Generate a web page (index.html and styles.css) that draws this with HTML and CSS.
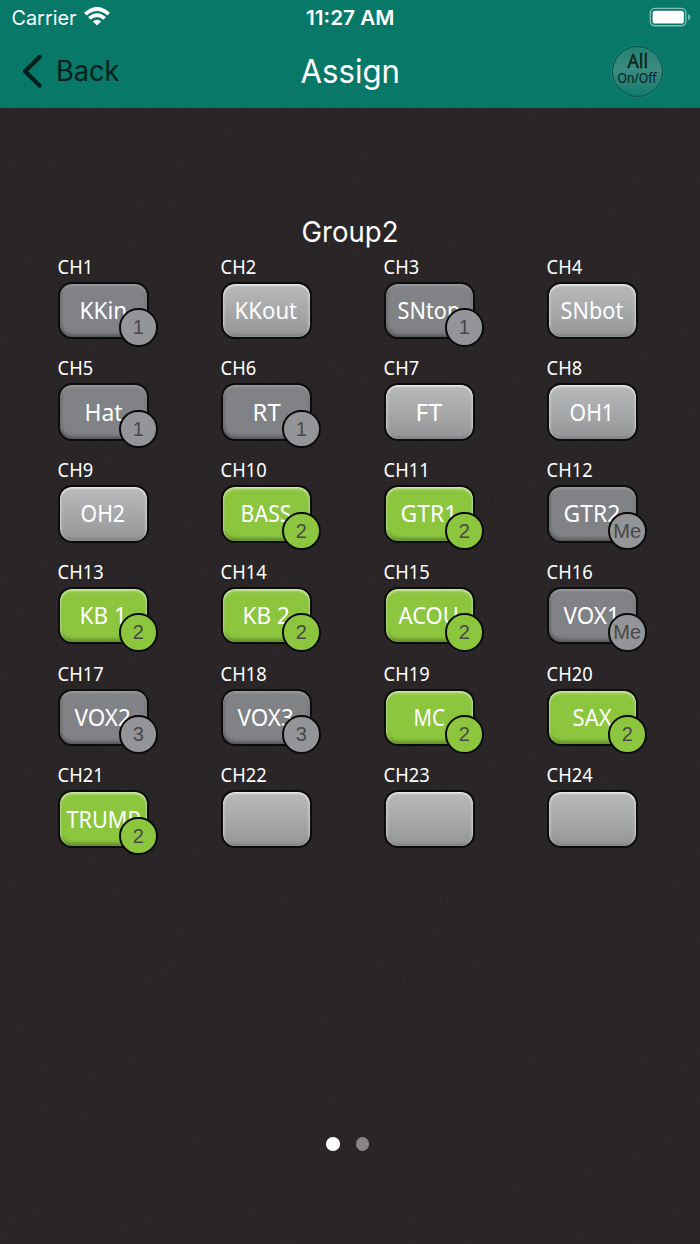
FILE: index.html
```html
<!DOCTYPE html>
<html lang="en">
<head>
<meta charset="utf-8">
<title>Assign</title>
<link rel="stylesheet" href="styles.css">
</head>
<body>
<div class="screen">
<header class="header">
  <div class="status">
    <div class="carrier">
      <svg class="t" width="65" height="36"><text class="ui" x="-.5" y="25" font-size="20" textLength="65" lengthAdjust="spacingAndGlyphs">Carrier</text></svg>
      <svg class="wifi" width="26" height="19" viewBox="0 0 26 19"><g fill="none" stroke="#fff" stroke-width="3.7"><path d="M1.3 7.2Q13-3.2 24.7 7.2"/><path d="M5.3 11.4Q13 4.7 20.7 11.4"/></g><path d="M13 18.6 8.8 14.5Q13 11 17.2 14.5Z" fill="#fff"/></svg>
    </div>
    <svg class="t" width="88" height="36"><text class="ui semi" x="-2" y="25" font-size="20" textLength="88.5" lengthAdjust="spacingAndGlyphs">11:27 AM</text></svg>
    <div class="power"><svg width="42" height="20" viewBox="0 0 42 20"><rect x="1.3" y="1.4" width="35.6" height="17.4" rx="4.5" fill="none" stroke="#85bbb3" stroke-width="1.4"/><rect x="3.6" y="3.8" width="31.3" height="12.8" rx="2.7" fill="#fff"/><path d="M39.2 7Q41.5 7.8 41.5 10.1T39.2 13.3Z" fill="#85bbb3"/></svg></div>
  </div>
  <nav class="nav">
    <div class="back">
      <svg width="22" height="34" viewBox="0 0 22 34"><path d="M17.5 3 3 17.3 17.5 31.5" fill="none" stroke="#041e1b" stroke-width="4.2" stroke-linecap="round" stroke-linejoin="round"/></svg>
      <svg class="t" width="64" height="72"><text class="ui dark" x="0" y="45" font-size="28" textLength="63.5" lengthAdjust="spacingAndGlyphs">Back</text></svg>
    </div>
    <svg class="t" width="100" height="72"><text class="ui" x=".5" y="47" font-size="32.5" textLength="99.5" lengthAdjust="spacingAndGlyphs">Assign</text></svg>
    <div class="toggle-wrap"><div class="toggle">
      <svg class="t" width="48" height="48"><text class="label dark bold" x="14.5" y="21" font-size="20.5" textLength="20.5" lengthAdjust="spacingAndGlyphs">All</text><text class="label dark" x="4.5" y="36" font-size="13.8" textLength="39" lengthAdjust="spacingAndGlyphs">On/Off</text></svg>
    </div></div>
  </nav>
</header>
<main class="main">
  <svg class="grain"><filter id="grain" x="0" y="0" width="100%" height="100%"><feTurbulence type="fractalNoise" baseFrequency=".35" numOctaves="3" seed="4"/><feColorMatrix values="0 0 0 0 1 0 0 0 0 1 0 0 0 0 1 .5 .5 0 0 -.42"/></filter><rect width="100%" height="100%" filter="url(#grain)"/></svg>
  <div class="group"><svg class="t" width="97" height="40"><text class="ui" x="-.5" y="28.3" font-size="28" textLength="97" lengthAdjust="spacingAndGlyphs">Group2</text></svg></div>
  <div class="channels" id="channels"></div>
  <div class="pager"><i class="dot current"></i><i class="dot"></i></div>
</main>
</div>
<script src="app.js"></script>
</body>
</html>
```

FILE: app.js
```js
// name, label width, state, badge
const channels = [
  ['KKin', 47.6, 'dim', '1'], ['KKout', 62.5, '', ''], ['SNtop', 62.6, 'dim', '1'], ['SNbot', 62.6, '', ''],
  ['Hat', 38, 'dim', '1'], ['RT', 28, 'dim', '1'], ['FT', 26.5, '', ''], ['OH1', 44.4, '', ''],
  ['OH2', 44.4, '', ''], ['BASS', 51, 'on', '2'], ['GTR1', 56.7, 'on', '2'], ['GTR2', 56.7, 'dim', 'Me'],
  ['KB 1', 47.2, 'on', '2'], ['KB 2', 47.2, 'on', '2'], ['ACOU', 60.2, 'on', '2'], ['VOX1', 56.2, 'dim', 'Me'],
  ['VOX2', 56.2, 'dim', '3'], ['VOX3', 56.2, 'dim', '3'], ['MC', 31.4, 'on', '2'], ['SAX', 39, 'on', '2'],
  ['TRUMP', 73.9, 'on', '2'], ['', 0, '', ''], ['', 0, '', ''], ['', 0, '', '']
];

function label(text, width, height, baseline, size) {
  return `<svg class="t" width="${width}" height="${height}"><text class="label" x="-.4" y="${baseline}" font-size="${size}" textLength="${width}" lengthAdjust="spacingAndGlyphs">${text}</text></svg>`;
}

document.getElementById('channels').innerHTML = channels.map(([name, width, state, badge], i) => `
  <div class="ch">
    ${label('CH' + (i + 1), i < 9 ? 35.5 : 46, 27, 19.3, 20)}
    <div class="pad ${state}">
      ${name ? label(name, width, 57, 37, 24) : ''}
      ${badge ? `<span class="badge">${badge}</span>` : ''}
    </div>
  </div>`).join('');
```

FILE: styles.css
```css
* { box-sizing: border-box; }
body { margin: 0; background: #292527; color: #fff; }
svg { display: block; flex: none; }
.screen { width: 700px; height: 1244px; display: flex; flex-direction: column; overflow: hidden; }
.t { overflow: visible; }
text { fill: #fff; }
.ui { font-family: Inter, sans-serif; }
.semi { font-weight: 600; }
.label { font-family: "Noto Sans", sans-serif; }
text.dark { fill: #06201d; }
.bold { stroke: #06201d; stroke-width: .4px; }

.header { height: 108px; background: #087869; }
.status { height: 36px; display: grid; grid-template-columns: 1fr 88px 1fr; padding: 0 9px 0 12px; }
.carrier { display: flex; gap: 7px; }
.wifi { margin-top: 7px; }
.power { display: flex; justify-content: flex-end; padding-top: 7px; }
.nav { height: 72px; display: grid; grid-template-columns: 278px 100px 1fr; padding: 0 37.5px 0 22px; }
.back { display: flex; align-items: center; gap: 12px; }
.back > svg:first-child { margin-top: -2px; }
.toggle-wrap { display: flex; justify-content: flex-end; padding-top: 10px; }
.toggle { width: 51px; height: 51px; border-radius: 50%; border: 1.5px solid #075147; background: linear-gradient(#23806f, #3b8c81 45%, #117a6b); box-shadow: 0 0 0 1px #1d8072; }

.main { position: relative; flex: 1; display: flex; flex-direction: column; padding-top: 106px; }
.grain { position: absolute; inset: 0; width: 100%; height: 100%; opacity: .06; }
.group { height: 40.5px; display: flex; justify-content: center; position: relative; }
.channels { position: relative; padding-left: 58px; display: grid; grid-template-columns: repeat(4, 91px); column-gap: 72px; grid-auto-rows: 101.8px; }
.pad { position: relative; width: 91px; height: 57.5px; border: 2px solid #0c0c0c; border-radius: 14px; display: flex; align-items: center; justify-content: center; background: linear-gradient(#b9babc, #949698); box-shadow: inset 0 2px 2px -.5px #eee, inset 2px 0 3px -1.5px #ddd, inset -2px 0 3px -1.5px #ddd, inset 0 -3px 3px -1px #77797b; }
.pad.dim { background: #818285; box-shadow: inset 0 2px 3px -.5px #a2a3a5, inset 0 -3px 4px -1px #4e4f51, inset 2px 0 3px -1px #5c5c5c, inset -2px 0 3px -1.5px #777; }
.pad.on { background: #8cc63f; box-shadow: inset 0 2px 3px -.5px #dff0c4, inset 2px 0 3px -1.5px #b9de85, inset -2px 0 3px -1.5px #c0e28f, inset 0 -3px 4px -1px #4b7020; }
.badge { position: absolute; left: 59px; top: 24.5px; width: 38.5px; height: 38.5px; border: 2px solid #0a0a0a; border-radius: 50%; background: #939598; color: #484848; font: 20px/35px "Liberation Sans", Arial, sans-serif; display: flex; justify-content: center; }
.on .badge { background: #8cc63f; }
.pager { position: relative; display: flex; justify-content: center; gap: 16px; margin-top: 272.2px; padding-right: 5px; }
.dot { width: 13.5px; height: 13.5px; border-radius: 50%; background: #89878a; }
.dot.current { background: #fff; }
```
